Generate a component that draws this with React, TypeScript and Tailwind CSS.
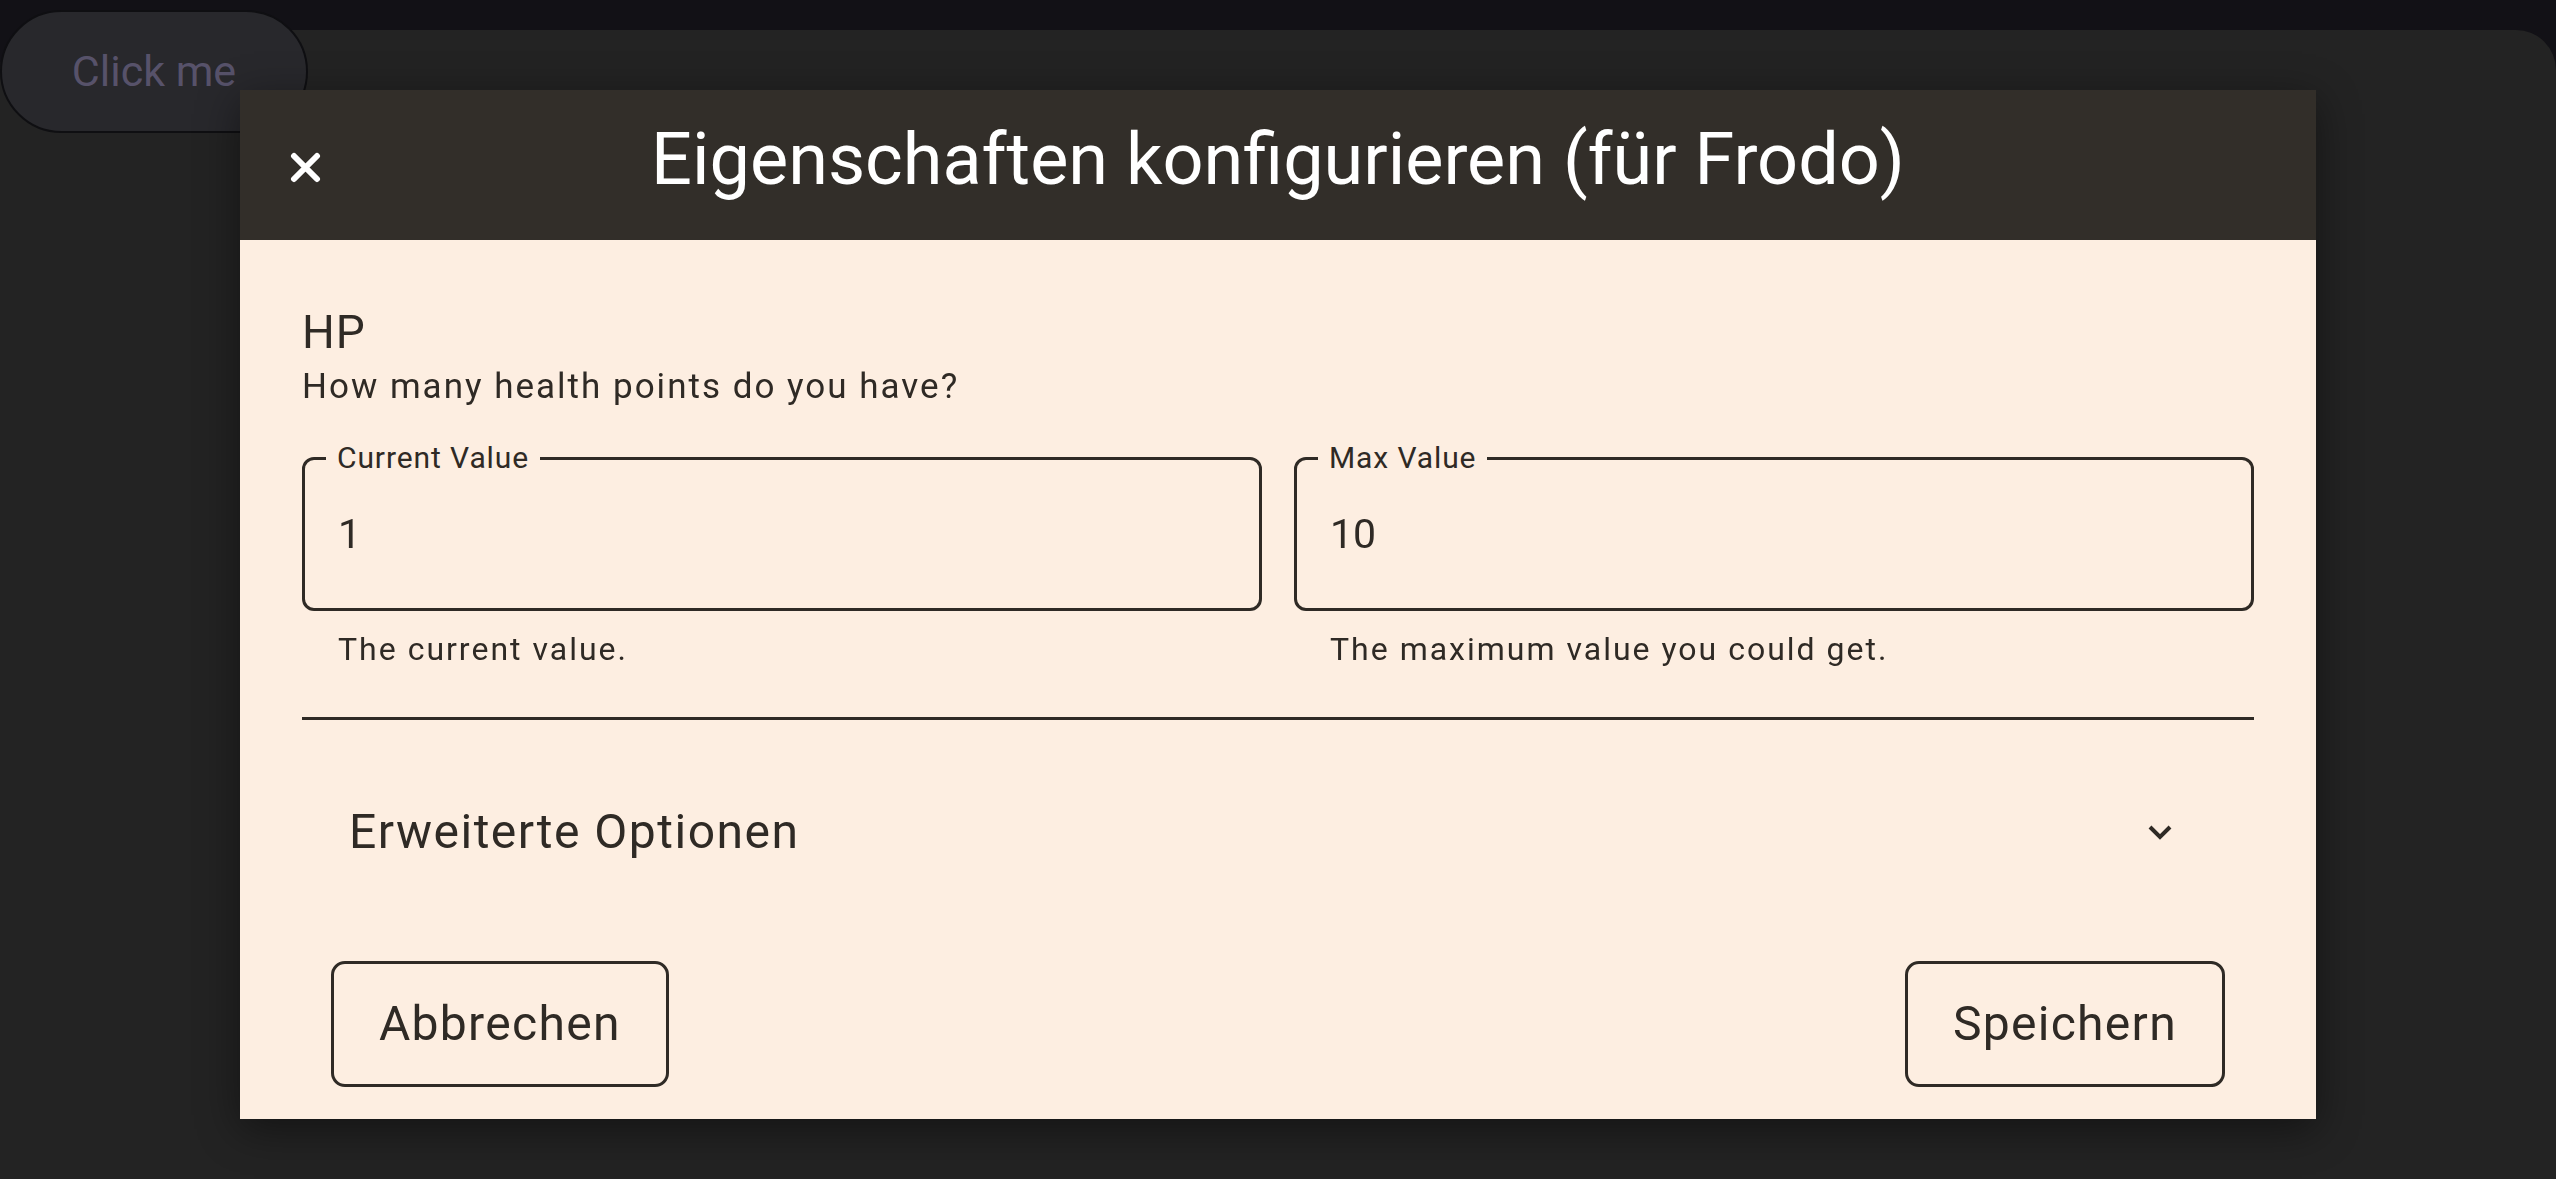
import { useState } from "react";

const font = { fontFamily: "Roboto, 'Noto Sans', sans-serif" };

function ValueField({ label, value, hint }: { label: string; value: string; hint: string }) {
  return (
    <div className="flex-1">
      <div className="relative flex h-[154px] items-center rounded-[12px] border-[3px] border-[#2f2a25] pl-[33px]">
        <span className="absolute -top-[20px] left-[21px] bg-[#fdeee1] px-[11px] text-[30px] leading-[36px] tracking-[0.9px] text-[#2f2a25]">
          {label}
        </span>
        <span className="text-[41px] leading-[48px] text-[#2f2a25]">{value}</span>
      </div>
      <p className="mt-[19px] pl-[36px] text-[32px] leading-[38px] tracking-[2px] text-[#2f2a25]">{hint}</p>
    </div>
  );
}

export default function App() {
  const [open, setOpen] = useState(false);

  return (
    <div className="min-h-[1179px] bg-[#121116] pt-[30px]" style={font}>
      <div className="flow-root min-h-[1149px] rounded-t-[40px] bg-[#232323]">
        <button className="-mt-[20px] flex h-[123px] w-[308px] items-center justify-center rounded-full border-2 border-[#0f0f12] bg-[#28282c] text-[43px] text-[#57526a]">
          Click me
        </button>
      </div>

      {/* modal dialog */}
      <div className="fixed left-[240px] top-[90px] w-[2076px] bg-[#fdeee1] shadow-[0_10px_40px_rgba(0,0,0,0.45)]">
        <div className="relative flex h-[150px] items-center justify-center bg-[#322e29] pb-[10px]">
          <button className="absolute left-[50px] top-[62px]">
            <svg width="31" height="31" viewBox="0 0 31 31" fill="none" stroke="white" strokeWidth="6" strokeLinecap="round">
              <path d="M4 4 L27 27 M27 4 L4 27" />
            </svg>
          </button>
          <h1 className="text-[72px] font-normal leading-[86px] text-white">Eigenschaften konfigurieren (für Frodo)</h1>
        </div>

        <div className="px-[62px] pt-[65px] text-[#2f2a25]">
          <h2 className="text-[46px] leading-[54px] tracking-[1px]">HP</h2>
          <p className="mt-[7px] text-[35px] leading-[41px] tracking-[2px]">How many health points do you have?</p>

          <div className="mt-[50px] flex gap-[32px]">
            <ValueField label="Current Value" value="1" hint="The current value." />
            <ValueField label="Max Value" value="10" hint="The maximum value you could get." />
          </div>

          <div className="mt-[49px] h-[3px] bg-[#2f2a25]" />

          <button
            onClick={() => setOpen(!open)}
            className="flex h-[224px] w-full items-center justify-between pl-[47px] pr-[82px]"
          >
            <span className="text-[48px] leading-[56px] tracking-[1.5px]">Erweiterte Optionen</span>
            <svg width="24" height="15" viewBox="0 0 24 15" fill="none" stroke="#2f2a25" strokeWidth="4">
              <path d={open ? "M2 13 L12 3 L22 13" : "M2 2 L12 12 L22 2"} />
            </svg>
          </button>
        </div>

        <div className="mt-[17px] flex justify-between px-[91px] pb-[32px]">
          <button className="h-[126px] rounded-[14px] border-[3px] border-[#2f2a25] px-[45px] text-[48px] tracking-[1.3px] text-[#2f2a25]">
            Abbrechen
          </button>
          <button className="h-[126px] rounded-[14px] border-[3px] border-[#2f2a25] px-[45px] text-[48px] tracking-[1.3px] text-[#2f2a25]">
            Speichern
          </button>
        </div>
      </div>
    </div>
  );
}
